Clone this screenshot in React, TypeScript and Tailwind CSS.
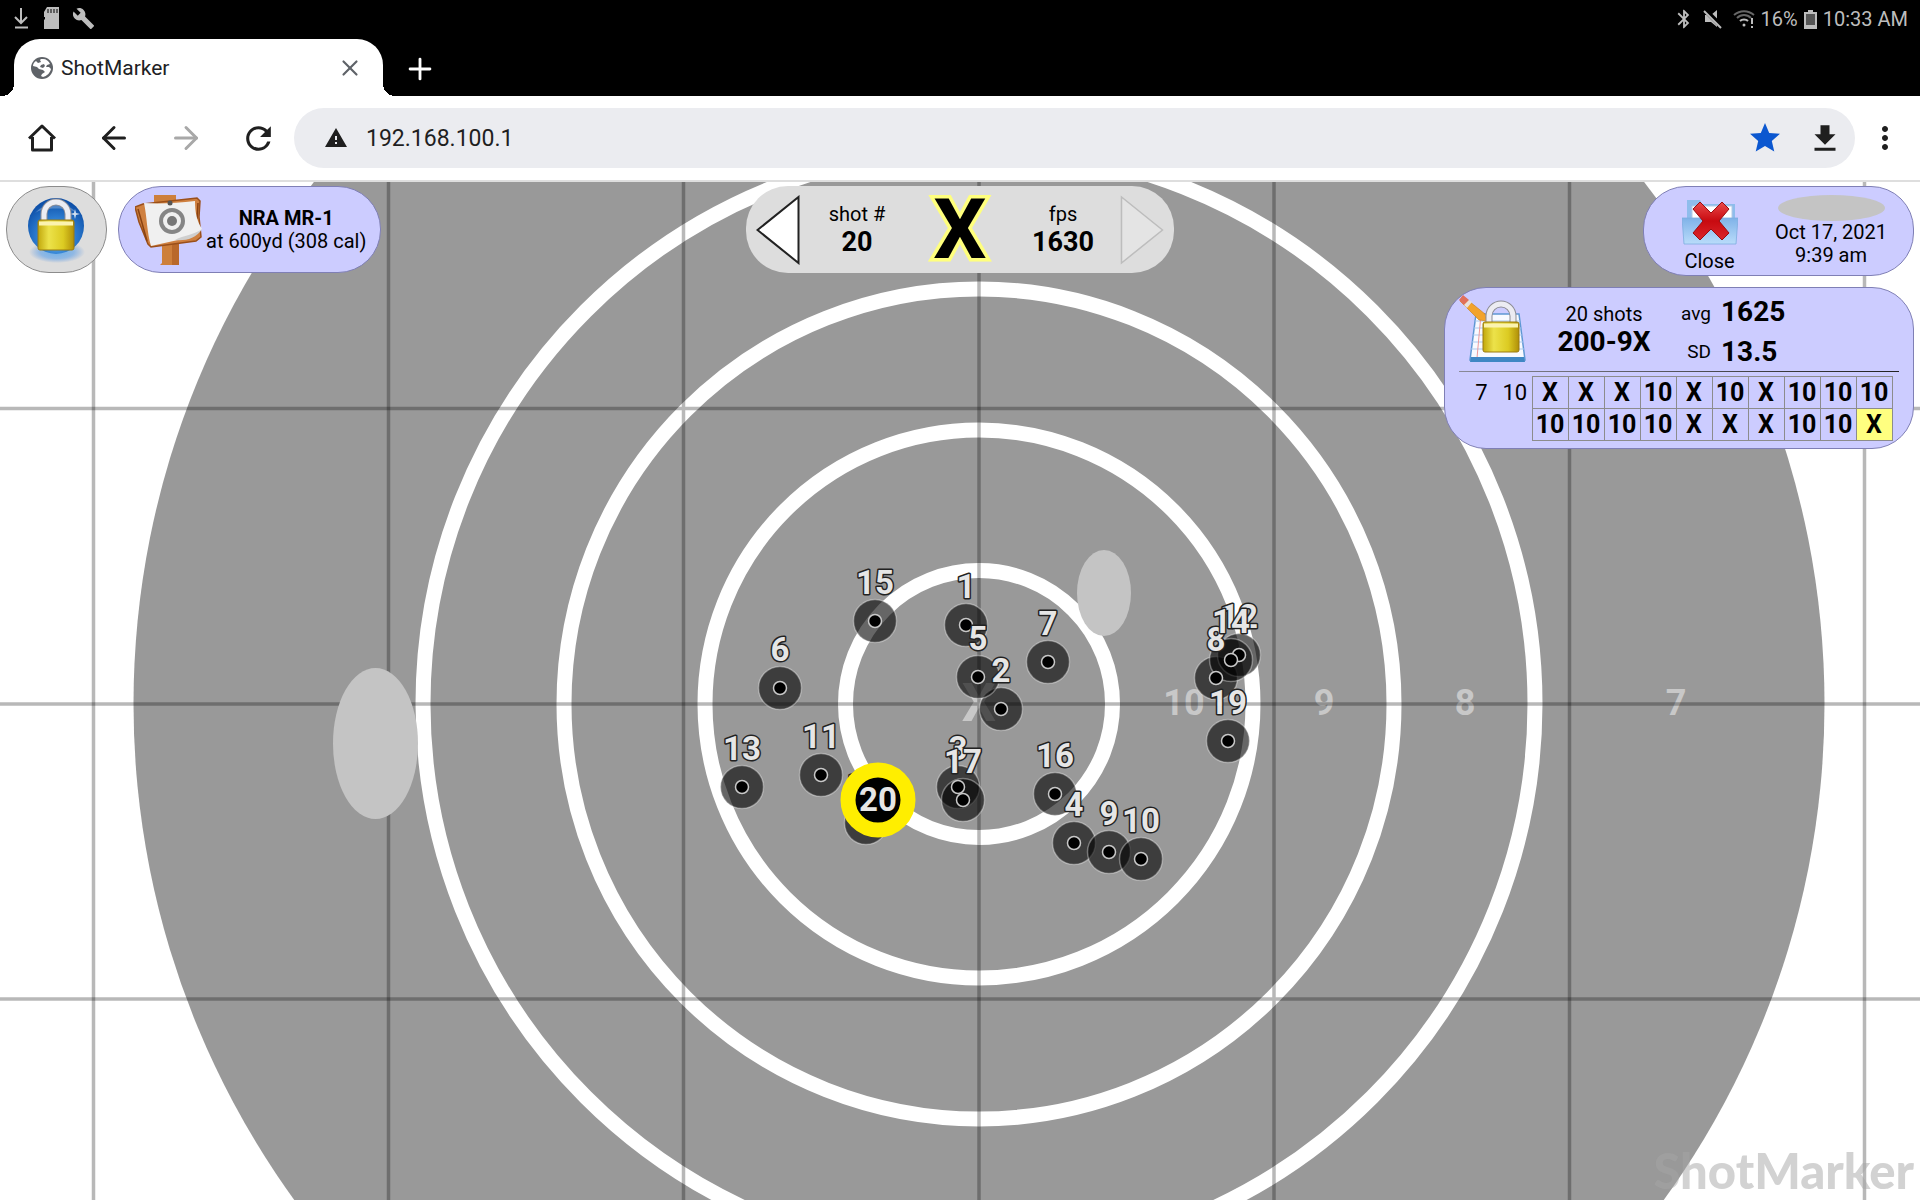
import type { ReactNode } from 'react';
import { ArrowLeft, ArrowRight, Plus, X } from 'lucide-react';
import { MdBluetooth, MdBuild, MdMoreVert, MdRefresh, MdStar, MdWarning } from 'react-icons/md';

// Offsets from the target centre
const SHOTS = [
  { n: 1, x: -13, y: -79 },
  { n: 2, x: 22, y: 5 },
  { n: 3, x: -21, y: 83 },
  { n: 4, x: 95, y: 139 },
  { n: 5, x: -1, y: -27 },
  { n: 6, x: -199, y: -16 },
  { n: 7, x: 69, y: -42 },
  { n: 8, x: 237, y: -26 },
  { n: 9, x: 130, y: 148 },
  { n: 10, x: 162, y: 155 },
  { n: 11, x: -158, y: 71 },
  { n: 12, x: 260, y: -49 },
  { n: 13, x: -237, y: 83 },
  { n: 14, x: 252, y: -44 },
  { n: 15, x: -104, y: -83 },
  { n: 16, x: 76, y: 90 },
  { n: 17, x: -16, y: 96 },
  { n: 18, x: -113, y: 119 },
  { n: 19, x: 249, y: 37 },
];

const RINGS = [133.5, 274, 415, 556];

const RING_LABELS = [
  { text: '10', x: 205 },
  { text: '9', x: 345 },
  { text: '8', x: 486 },
  { text: '7', x: 697 },
];

const GRID = [-1475, -1180, -885.5, -590.5, -295.5, 0, 295, 590.5, 885.5, 1180, 1475];

const SCORES = [
  ['X', 'X', 'X', '10', 'X', '10', 'X', '10', '10', '10'],
  ['10', '10', '10', '10', 'X', 'X', 'X', '10', '10', 'X'],
];

function StatusBar() {
  return (
    <div className="flex h-9 items-center justify-between bg-black px-3 text-[#bdbdbd]">
      <div className="flex items-center gap-3">
        <svg width="18" height="22" viewBox="0 0 18 22" fill="none" stroke="currentColor" strokeWidth="2">
          <path d="M9 1v15M3 10l6 6 6-6M3 20.500h13" />
        </svg>
        <svg width="18" height="22" viewBox="0 0 18 22" fill="currentColor">
          <path d="M5 0h12v22H2v-9l1-1V10H2V5z" />
          <path d="M6 2v4M9 2v4M12 2v4M15 2v4" stroke="#000" strokeWidth="1" />
        </svg>
        <MdBuild size={23} />
      </div>
      <div className="flex items-center pt-0.5 text-[20px] leading-6">
        <MdBluetooth size={22} className="mr-2" />
        <svg width="20" height="20" viewBox="0 0 20 20" fill="currentColor" className="mr-2.5">
          <path d="M2 6h6l6-5v17l-6-5H2z" />
          <path d="M1 0l18 18" stroke="#000" strokeWidth="5" />
          <path d="M1 2l17 17" stroke="currentColor" strokeWidth="2" />
        </svg>
        <svg width="22" height="20" viewBox="0 0 22 20" fill="none" stroke="currentColor" strokeWidth="2" className="mr-1.5">
          <path d="M1 6c6-5 14-5 20 0M4 9c4-4 10-4 14 0" stroke="#666" />
          <path d="M7 12c2-2 6-2 8 0" />
          <circle cx="11" cy="16" r="1.500" fill="currentColor" stroke="none" />
          <path d="M19 9v6M19 17v2" />
        </svg>
        <span>16%</span>
        <svg width="13" height="19" viewBox="0 0 13 19" className="mx-1.5">
          <path d="M4 0h5v2h4v17H0V2h4z" fill="#bdbdbd" />
          <path d="M2 4h9v11H2z" fill="#555" />
        </svg>
        <span>10:33 AM</span>
      </div>
    </div>
  );
}

function GlobeIcon() {
  return (
    <svg width="22" height="22" viewBox="0 0 22 22">
      <circle cx="11" cy="11" r="11" fill="#5f6368" />
      <path
        d="M12 2c3 0 6 2 7 5l-3 1-1 2h3l2 2c-1 4-4 7-8 8l-2-1 1-2 3-2-2-2-4-1-2-2-4-1c0-2 1-4 3-5l2 2 3-1-1-2 1-1z"
        fill="#fff"
      />
      <path d="M13 7l-3 1-1 2 3 1 2-2z" fill="#5f6368" />
    </svg>
  );
}

function TabStrip() {
  return (
    <div className="flex h-[60px] items-end bg-black pl-3.5">
      <div className="relative flex h-[57px] w-[369px] items-center rounded-t-[26px] bg-white pl-[17px] pr-5 before:absolute before:-left-3 before:bottom-0 before:size-3 before:bg-[radial-gradient(circle_at_0_0,transparent_12px,white_12px)] after:absolute after:-right-3 after:bottom-0 after:size-3 after:bg-[radial-gradient(circle_at_100%_0,transparent_12px,white_12px)]">
        <GlobeIcon />
        <span className="ml-2 flex-1 text-[21px] leading-6 text-[#202124]">ShotMarker</span>
        <button aria-label="Close tab" className="text-[#5f6368]">
          <X size={26} strokeWidth={2} />
        </button>
      </div>
      <button aria-label="New tab" className="mb-2.5 ml-5 text-white">
        <Plus size={34} strokeWidth={2} />
      </button>
    </div>
  );
}

function NavButton({ label, children, dim = false }: { label: string; children: ReactNode; dim?: boolean }) {
  return (
    <button
      aria-label={label}
      className={`flex h-12 w-[72px] items-center justify-center ${dim ? 'text-[#a8a8a8]' : 'text-[#1f1f1f]'}`}
    >
      {children}
    </button>
  );
}

function Toolbar() {
  return (
    <div className="flex h-[86px] items-center border-b-2 border-[#dedede] bg-white pl-1.5 pr-[5px]">
      <NavButton label="Home">
        <svg width="28" height="28" viewBox="0 0 28 28" fill="none" stroke="currentColor" strokeWidth="3">
          <path d="M1 14.500L14 2l13 12.500M4.500 13v13h19V13" strokeLinejoin="round" />
        </svg>
      </NavButton>
      <NavButton label="Back">
        <ArrowLeft size={36} strokeWidth={2} />
      </NavButton>
      <NavButton label="Forward" dim>
        <ArrowRight size={36} strokeWidth={2} />
      </NavButton>
      <NavButton label="Reload">
        <MdRefresh size={37} />
      </NavButton>
      <div className="flex h-[60px] flex-1 items-center rounded-full bg-[#ebecf0] pl-[30px]">
        <MdWarning size={24} className="text-[#1f1f1f]" />
        <input
          aria-label="Address"
          defaultValue="192.168.100.1"
          className="ml-[18px] min-w-0 flex-1 bg-transparent pt-0.5 text-[23px] leading-7 text-[#1f1f1f] outline-none"
        />
        <button aria-label="Bookmark" className="flex w-[60px] justify-center text-[#0b57d0]">
          <MdStar size={36} />
        </button>
        <button aria-label="Download" className="flex w-[60px] justify-center text-[#1f1f1f]">
          <svg width="36" height="36" viewBox="0 0 24 24" fill="currentColor">
            <path d="M19 9h-4V3H9v6H5l7 7 7-7zM5 18v2h14v-2H5z" transform="translate(0 .5)" />
          </svg>
        </button>
      </div>
      <button aria-label="Menu" className="flex w-[60px] justify-center text-[#1f1f1f]">
        <MdMoreVert size={36} />
      </button>
    </div>
  );
}

function Target() {
  return (
    <svg
      className="absolute inset-0 h-full w-full"
      viewBox="-979 -522 1920 1018"
      preserveAspectRatio="xMidYMid slice"
      textAnchor="middle"
      fontWeight="700"
    >
      <circle r="845.500" fill="#999" />
      {RINGS.map((r) => (
        <circle key={r} r={r} fill="none" stroke="#fff" strokeWidth="15" />
      ))}
      <g fill="#c8c8c8" fontSize="36">
        <text y="17" fontSize="54">X</text>
        {RING_LABELS.map((label) => (
          <text key={label.text} x={label.x} y="11">{label.text}</text>
        ))}
      </g>
      {GRID.map((pos) => (
        <path key={pos} d={`M${pos} -1500V1500M-1500 ${pos}H1500`} stroke="#000" strokeOpacity=".28" strokeWidth="3.500" />
      ))}
      <ellipse cx="125" cy="-111" rx="27" ry="43" fill="#c4c4c4" />
      <ellipse cx="-603.500" cy="39.500" rx="42.500" ry="75.500" fill="#c4c4c4" />

      {SHOTS.map((s) => (
        <circle key={s.n} cx={s.x} cy={s.y} r="21.500" fill="#000" fillOpacity=".6" stroke="#fff" strokeOpacity=".35" strokeWidth="1.500" />
      ))}
      {SHOTS.map((s) => (
        <circle key={s.n} cx={s.x} cy={s.y} r="6.500" fill="#000" stroke="#c8c8c8" strokeWidth="1.500" />
      ))}
      <g fill="#e6e6e6" stroke="#222" strokeWidth="3" strokeLinejoin="round" paintOrder="stroke" fontSize="33">
        {SHOTS.map((s) => (
          <text key={s.n} x={s.x} y={s.y - 27}>{s.n}</text>
        ))}
      </g>
      <circle cx="-101" cy="96" r="30" fill="#000" stroke="#fe0" strokeWidth="15" />
      <text x="-101" y="107" fill="#e6e6e6" fontSize="33">20</text>
    </svg>
  );
}

function Padlock() {
  return (
    <g>
      <path d="M14 25V16a12 12 0 0 1 24 0v9" fill="none" stroke="#8d8d95" strokeWidth="7" />
      <path d="M14 25V16a12 12 0 0 1 24 0v9" fill="none" stroke="#ececf2" strokeWidth="5" />
      <rect x="8" y="22" width="36" height="30" rx="2" fill="url(#gold)" stroke="#9a7a10" />
      <path d="M9 23.500h34v4H9z" fill="#fbf3b0" />
    </g>
  );
}

function LockOrbIcon() {
  return (
    <svg width="60" height="66" viewBox="0 0 60 66">
      <defs>
        <linearGradient id="gold" x1="0" x2="1">
          <stop offset="0" stopColor="#c2a80c" />
          <stop offset=".3" stopColor="#ece24a" />
          <stop offset=".7" stopColor="#dccb22" />
          <stop offset="1" stopColor="#b08f08" />
        </linearGradient>
        <radialGradient id="orb" cx=".5" cy=".7" r=".65">
          <stop offset="0" stopColor="#7cc4f5" />
          <stop offset=".5" stopColor="#2f7fd2" />
          <stop offset="1" stopColor="#0d4fa8" />
        </radialGradient>
        <radialGradient id="puddle">
          <stop offset="0" stopColor="#6fb0e8" />
          <stop offset=".6" stopColor="#8fb8e4" />
          <stop offset="1" stopColor="#8fb0dd" stopOpacity="0" />
        </radialGradient>
      </defs>
      <ellipse cx="30" cy="55" rx="28" ry="11" fill="url(#puddle)" />
      <circle cx="29" cy="29" r="28" fill="url(#orb)" />
      <path d="M8 16a26 22 0 0 1 42 0c-8-6-34-6-42 0z" fill="#fff" fillOpacity=".25" />
      <path d="M48 12l1 4 4 1-4 1-1 4-1-4-4-1 4-1z" fill="#fff" fillOpacity=".8" />
      <g transform="translate(3 1)">
        <Padlock />
      </g>
    </svg>
  );
}

function SignIcon() {
  return (
    <svg width="68" height="70" viewBox="0 0 68 70">
      <path d="M19 0h22v8H19zM27 44l17-3v29H25l2-2z" fill="#cd7f3b" />
      <path d="M37 43l7-2v29h-7z" fill="#b9682a" />
      <path d="M0 12l8-3 54-6 3 3-1 16 2 20-5 4-45 6-3-3-9-22z" fill="#cf8040" stroke="#9a4f1a" strokeWidth="1.500" />
      <path d="M3 14l4 14 5 18M63 8l-1 16" stroke="#8a4212" strokeWidth="1.500" fill="none" />
      <path d="M9 8c16 1 34 0 51-2 0 12 2 20 7 28-6 7-16 9-24 11l-27 6C12 38 12 22 9 8z" fill="#f0f0f0" />
      <path d="M67 34c-8 6-18 6-27 11 10 1 21-1 27-11z" fill="#cfcfcf" />
      <circle cx="37" cy="26" r="11" fill="none" stroke="#858585" strokeWidth="4" />
      <circle cx="37" cy="26" r="5" fill="#777" />
      <circle cx="35" cy="8" r="2.500" fill="#555" />
    </svg>
  );
}

function FolderCloseIcon() {
  return (
    <svg width="56" height="46" viewBox="0 0 56 46">
      <defs>
        <linearGradient id="folder" x1="0" y1="0" x2="0" y2="1">
          <stop offset="0" stopColor="#7fb2e8" />
          <stop offset="1" stopColor="#b9dcfa" />
        </linearGradient>
        <linearGradient id="cross" x1="0" y1="0" x2="0" y2="1">
          <stop offset="0" stopColor="#ea4a4a" />
          <stop offset=".5" stopColor="#c80a10" />
          <stop offset="1" stopColor="#d9262a" />
        </linearGradient>
      </defs>
      <path d="M5 1h13l2 4h33v26H5z" fill="#8fbdec" />
      <path d="M10 7h40v20H10z" fill="#fff" stroke="#b4cae4" />
      <path d="M0 19h56l-2 26H2z" fill="url(#folder)" stroke="#7eade0" strokeWidth=".8" />
      <path d="M11 10l7-7 11 11L40 3l7 7-10 12 10 12-7 7-11-11-11 11-7-7 10-12z" fill="url(#cross)" stroke="#9c0c10" />
    </svg>
  );
}

function NotepadLockIcon() {
  return (
    <svg width="68" height="68" viewBox="0 0 68 68">
      <path d="M17 19h43l6 46H11z" fill="#f8faff" stroke="#5f98d4" strokeWidth="1.500" />
      <path d="M16 26h45M15 33h47M14 40h49M13 47h51M12 54h53" stroke="#aac8ee" />
      <path d="M22 19l-4 44" stroke="#e99" />
      <path d="M12 62h53l1 5H11z" fill="#3f87c4" />
      <path d="M5 2l21 17 2 7-8-1L1 6z" fill="#f2a32c" stroke="#c77a18" strokeWidth=".6" />
      <path d="M4 0l6 5-5 5-5-5z" fill="#e0705c" />
      <path d="M10 5l3 2-5 6-3-3z" fill="#e8e0dc" />
      <g transform="translate(16 5)">
        <Padlock />
      </g>
    </svg>
  );
}

function ShotSelector() {
  return (
    <div className="flex h-[87px] items-center rounded-[42px] bg-[#ddd] px-2.5">
      <button aria-label="Previous shot">
        <svg width="44" height="70" viewBox="0 0 44 70">
          <path d="M1.500 35L42.500 2v66z" fill="#fff" stroke="#222" strokeWidth="2" />
        </svg>
      </button>
      <div className="w-[114px] text-center">
        <p className="text-[20px] leading-6">shot #</p>
        <p className="text-[27px] font-bold leading-8">20</p>
      </div>
      <div className="w-[92px] text-center text-[84px] font-bold leading-[84px] [-webkit-text-stroke:7px_#ffff7d] [paint-order:stroke_fill]">
        X
      </div>
      <div className="w-[114px] text-center">
        <p className="text-[20px] leading-6">fps</p>
        <p className="text-[27px] font-bold leading-8">1630</p>
      </div>
      <button aria-label="Next shot" disabled>
        <svg width="44" height="70" viewBox="0 0 44 70">
          <path d="M42.500 35L1.500 2v66z" fill="#e4e4e4" stroke="#bdbdbd" strokeWidth="1.500" />
        </svg>
      </button>
    </div>
  );
}

function ScoreCard() {
  return (
    <div className="w-[470px] rounded-[42px] border border-[#7f7fb5] bg-[#ccf] pb-[7px]">
      <div className="flex h-[83px] px-3.5 pt-[7px]">
        <NotepadLockIcon />
        <div className="w-[154px] pt-[7px] text-center">
          <p className="text-[20px] leading-6">20 shots</p>
          <p className="text-[28px] font-bold leading-8">200-9X</p>
        </div>
        <dl className="grid grid-cols-[30px_auto] content-start gap-x-2.5 text-right text-[19px] leading-[38px]">
          <dt>avg</dt>
          <dd className="text-left text-[28px] font-bold leading-[34px]">1625</dd>
          <dt>SD</dt>
          <dd className="text-left text-[28px] font-bold">13.5</dd>
        </dl>
      </div>
      <div className="mx-3.5 mb-1 h-px bg-linear-to-r from-[#8a8a98] to-[#222]"></div>
      <table className="ml-5 table-fixed border-collapse text-center text-[25px] leading-[31px]">
        <tbody>
          {SCORES.map((row, i) => (
            <tr key={i} className="h-8">
              <td className="w-[33px] p-0 text-[22px]">{i === 0 ? '7' : ''}</td>
              <td className="w-[34px] p-0 text-[22px]">{i === 0 ? '10' : ''}</td>
              {row.map((score, j) => (
                <td
                  key={j}
                  className={`w-9 border border-[#8c8c8c] p-0 font-bold ${i === 1 && j === 9 ? 'bg-[#ffff80]' : ''}`}
                >
                  {score}
                </td>
              ))}
            </tr>
          ))}
        </tbody>
      </table>
    </div>
  );
}

export default function App() {
  return (
    <div className="flex min-h-screen flex-col font-[Roboto,sans-serif] text-black">
      <header>
        <StatusBar />
        <TabStrip />
        <Toolbar />
      </header>

      <main className="relative flex flex-1 flex-col justify-between overflow-hidden bg-white">
        <Target />

        <div className="relative grid grid-cols-[1fr_auto_1fr] items-start px-1.5 pt-1">
          <div className="flex gap-[11px]">
            <button aria-label="Lock" className="flex h-[87px] w-[101px] items-center justify-center rounded-[43px] border border-[#8c8c8c] bg-[#ddd]">
              <LockOrbIcon />
            </button>
            <button className="flex h-[87px] items-center gap-[3px] rounded-[43px] border border-[#7f7fb5] bg-[#ccf] pl-4 pr-3.5">
              <SignIcon />
              <span className="text-[20px] leading-[23px]">
                <b className="block">NRA MR-1</b>
                at 600yd (308 cal)
              </span>
            </button>
          </div>

          <ShotSelector />

          <div className="flex flex-col items-end gap-[11px]">
            <div className="flex h-[90px] w-[271px] rounded-[43px] border border-[#7f7fb5] bg-[#ccf]">
              <button className="flex w-[131px] flex-col items-center pt-3 text-[20px] leading-6">
                <FolderCloseIcon />
                <span className="mt-1">Close</span>
              </button>
              <div className="flex flex-col items-center pt-2 text-[20px] leading-[23px]">
                <div className="h-[26px] w-[107px] rounded-[50%] bg-[#c4c4c4]"></div>
                <span>Oct 17, 2021</span>
                <span>9:39 am</span>
              </div>
            </div>
            <ScoreCard />
          </div>
        </div>

        <div className="relative self-end pr-1.5 font-[Lato,sans-serif] text-[49px] font-black leading-[60px] text-[#a6a6a6]/50">
          ShotMarker
        </div>
      </main>
    </div>
  );
}
